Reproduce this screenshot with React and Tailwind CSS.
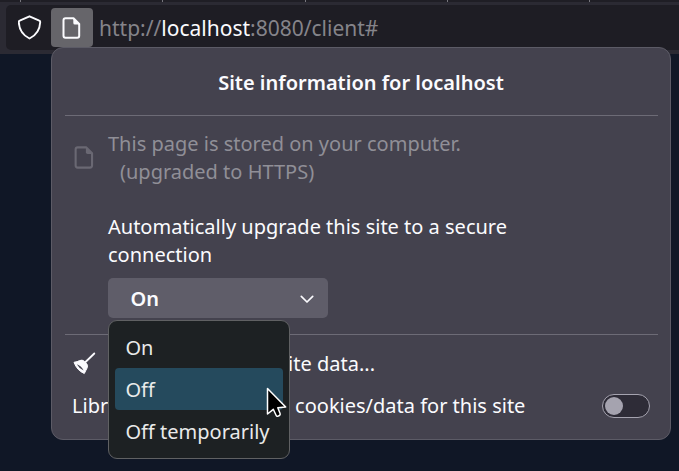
import React from "react";

function PageIcon({ className, strokeWidth = 2 }) {
  return (
    <svg className={className} viewBox="0 0 18 22" fill="none">
      <path
        d="M3 1.3H11L16.7 7V18.7Q16.7 20.7 14.7 20.7H3Q1 20.7 1 18.7V3.3Q1 1.3 3 1.3Z"
        stroke="currentColor"
        strokeWidth={strokeWidth}
        strokeLinejoin="round"
      />
      <path d="M10.8 1.5V6Q10.8 7.6 12.4 7.6H17Z" fill="currentColor" />
    </svg>
  );
}

function AddressBar() {
  return (
    <header className="h-[54px] bg-[#2b2a33]">
      <div className="flex h-[2px] gap-[141.25px] bg-[#1f1e25] pl-[20px]">
        {[0, 1, 2, 3, 4].map((i) => (
          <span key={i} className="h-[2px] w-px shrink-0 bg-[#77767d]" />
        ))}
      </div>
      <div className="mt-[3px] ml-[6px] flex h-[45px] items-start rounded-l-[5px] bg-[#1e1d24] pt-[3px]">
        <svg className="mt-[7px] ml-[12px] h-[25px] w-[24px]" viewBox="0 0 24 25" fill="none">
          <path
            d="M11.5 1.3L21.3 5.6Q22.3 6 22.2 7.2Q21.7 18.5 11.5 23.5Q1.3 18.5.8 7.2Q.7 6 1.7 5.6Z"
            stroke="#fbfbfe"
            strokeWidth="1.9"
            strokeLinejoin="round"
          />
        </svg>
        <div className="ml-[8.5px] flex h-[39px] w-[42.5px] items-center justify-center rounded-[4px] bg-[#66656a] text-[#fbfbfe]">
          <PageIcon className="h-[22px] w-[19px]" />
        </div>
        <div className="ml-[6px] text-[21px] leading-[40px] whitespace-pre text-[#85848a]">
          http://<span className="text-[#fbfbfe]">localhost</span>:8080/client#
        </div>
      </div>
    </header>
  );
}

function Menu() {
  return (
    <div className="absolute top-[42px] left-0 z-10 h-[139px] w-[182px] rounded-[9px] border border-[#606163] bg-[#1d2123] px-[6px] py-[5px] text-[#e9eaea]">
      <div className="h-[42px] pl-[10.5px] leading-[43px]">On</div>
      <div className="h-[42px] rounded-[4px] bg-[#254a5d] pl-[10.5px] leading-[43px]">Off</div>
      <div className="h-[42px] pl-[10.5px] leading-[43px] whitespace-nowrap">Off temporarily</div>
      <svg className="absolute top-[64px] left-[155px] h-[36px] w-[24px]" viewBox="0 0 24 36">
        <path
          d="M3.5 3.5V29L9.3 24.3L12.2 30.5Q12.8 31.8 14.2 31.1L15.4 30.5Q16.6 29.9 16.1 28.6L13.8 22.8L21.7 22Z"
          fill="#000"
          stroke="#fff"
          strokeWidth="1.5"
          strokeLinejoin="round"
        />
      </svg>
    </div>
  );
}

function SitePanel() {
  return (
    <section className="relative -mt-[7px] ml-[51px] h-[393px] w-[620px] rounded-[12px] border border-[#5c5b66] bg-[#44424e] px-[12.5px] text-[20px] leading-[28px] text-[#fbfbfe]">
      <h1 className="h-[68px] border-b border-[#6d6b76] text-center font-semibold leading-[69px]">
        Site information for localhost
      </h1>
      <div className="flex pt-[14px]">
        <PageIcon className="mt-[16px] ml-[9.5px] h-[23px] w-[20px] shrink-0 text-[#6a6873]" />
        <div className="ml-[14px]">
          <p className="text-[#908f97]">This page is stored on your computer.</p>
          <p className="pl-[12px] text-[#908f97]">(upgraded to HTTPS)</p>
          <p className="mt-[27px] w-[420px]">
            Automatically upgrade this site to a secure <br />
            connection
          </p>
          <div className="relative mt-[9px] w-[220px]">
            <button className="flex h-[40px] w-[220px] items-center justify-between rounded-[5px] bg-[#5f5d69] pt-[2px] pr-[14px] pl-[22.5px] font-semibold">
              On
              <svg className="h-[9px] w-[14px]" viewBox="0 0 14 9" fill="none">
                <path d="M1.3 1.3L7 7L12.7 1.3" stroke="#fbfbfe" strokeWidth="1.7" strokeLinecap="round" strokeLinejoin="round" />
              </svg>
            </button>
            <Menu />
          </div>
        </div>
      </div>
      <div className="mt-[16px] border-t border-[#6d6b76] pt-[7px]">
        <div className="flex h-[42px] items-center">
          <svg className="ml-[8px] h-[24px] w-[24px]" viewBox="0 0 24 24">
            <path d="M21.3 2.5L12.5 11" stroke="#fbfbfe" strokeWidth="1.8" strokeLinecap="round" />
            <path d="M1 11.3Q4.5 10.9 6.5 9.6Q9.2 8.3 11.4 10.3L13.6 12.6Q15.2 14.4 14.2 16.8Q12.8 19.5 11.3 22.5Q4 19.5 1 11.3Z" fill="#fbfbfe" stroke="#fbfbfe" strokeLinejoin="round" />
            <path d="M3.8 13.2Q8.2 14.5 10.6 19.6Q6.3 17.6 3.8 13.2Z" fill="#44424e" />
          </svg>
          <span className="ml-[11.5px] pt-px">Clear cookies and site data...</span>
        </div>
        <div className="flex h-[43px] items-center justify-between pr-[7.5px] pl-[7.5px]">
          <span>LibreWolf: Always store cookies/data for this site</span>
          <div className="flex h-[24px] w-[48px] items-center rounded-full border border-[#a5a3af] bg-[#2e2c37] pl-[2px]">
            <span className="h-[18px] w-[18px] rounded-full bg-[#a5a3af]" />
          </div>
        </div>
      </div>
    </section>
  );
}

export default function App() {
  return (
    <div className="h-[471px] w-[679px] overflow-hidden bg-[#101726] font-['Noto_Sans',sans-serif]">
      <AddressBar />
      <SitePanel />
    </div>
  );
}
